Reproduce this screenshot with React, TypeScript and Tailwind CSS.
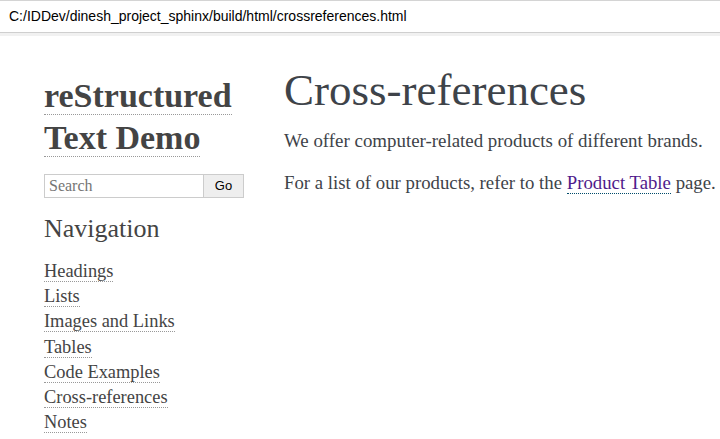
const navLinks = [
  "Headings",
  "Lists",
  "Images and Links",
  "Tables",
  "Code Examples",
  "Cross-references",
  "Notes",
];

const serif = "font-['Liberation_Serif',Georgia,serif]";

export default function App() {
  return (
    <div className="w-[720px] h-[439px] overflow-hidden bg-white">
      {/* address bar */}
      <div className="h-[33px] border-t border-[#d4d4d4] border-b border-b-[#cfcfcf] flex items-center pl-[9px]">
        <span className="font-['Liberation_Sans',Arial,sans-serif] text-[14px] text-black">
          C:/IDDev/dinesh_project_sphinx/build/html/crossreferences.html
        </span>
      </div>
      <div className="h-[3px] bg-[#f1f1f1]" />

      <div className={`flex pl-[44px] pt-[37px] text-[#3e4349] ${serif}`}>
        {/* sidebar */}
        <div className="w-[200px] shrink-0">
          <h1 className="mt-[2px] text-[34px] font-bold leading-[42px] text-[#444]">
            <span className="border-b border-dotted border-[#999]">reStructured</span>
            <br />
            <span className="border-b border-dotted border-[#999]">Text Demo</span>
          </h1>
          <div className="flex mt-[15px] h-[24px]">
            <div className="w-[160px] border border-[#ccc] flex items-center px-[4px] text-[16px] text-[#757575]">
              Search
            </div>
            <div className="w-[40px] border border-l-0 border-[#ccc] bg-[#eee] flex items-center justify-center font-['Liberation_Sans',Arial,sans-serif] text-[13px] text-black">
              Go
            </div>
          </div>
          <h3 className="mt-[15px] text-[26px] leading-[32px] text-[#444]">Navigation</h3>
          <ul className="mt-[14px] text-[18.4px] leading-[25.2px] text-[#444]">
            {navLinks.map((l) => (
              <li key={l}>
                <span className="border-b border-dotted border-[#999]">{l}</span>
              </li>
            ))}
          </ul>
        </div>

        {/* main */}
        <div className="pl-[40px]">
          <h1 className="text-[45px] leading-[34px] text-[#3e4349]">Cross-references</h1>
          <p className="mt-[22px] text-[18.9px] leading-[24px]">
            We offer computer-related products of different brands.
          </p>
          <p className="mt-[18px] text-[18.8px] leading-[24px] whitespace-nowrap">
            For a list of our products, refer to the{" "}
            <span className="text-[#4f1a8b] border-b border-dotted border-[#004b6b]">Product Table</span>{" "}
            page.
          </p>
        </div>
      </div>
    </div>
  );
}
